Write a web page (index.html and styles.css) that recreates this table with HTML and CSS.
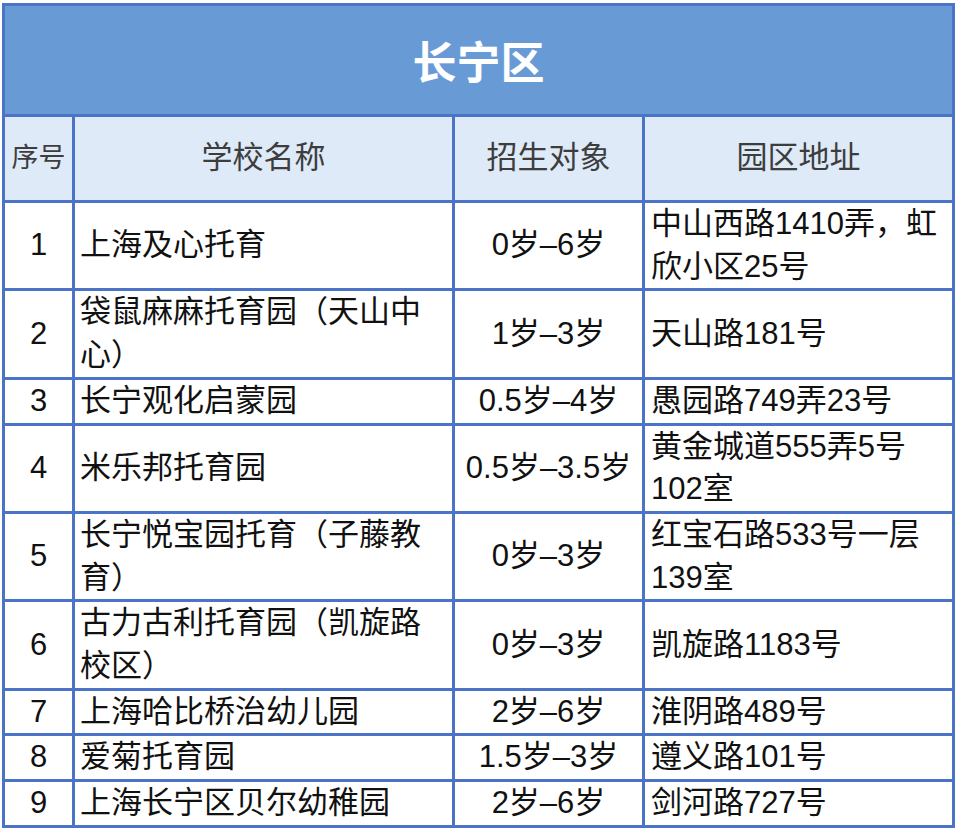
FILE: index.html
```html
<!DOCTYPE html>
<html lang="zh-CN">
<head>
<meta charset="utf-8">
<title>长宁区</title>
<link rel="stylesheet" href="styles.css">
</head>
<body>
<div class="sheet">
  <div class="roster">
    <div class="title">长宁区</div>

    <div class="row head">
      <div class="cell no head-no">序号</div>
      <div class="cell center">学校名称</div>
      <div class="cell center">招生对象</div>
      <div class="cell center">园区地址</div>
    </div>

    <div class="row">
      <div class="cell no">1</div>
      <div class="cell name">上海及心托育</div>
      <div class="cell center">0岁–6岁</div>
      <div class="cell addr">中山西路1410弄，虹欣小区25号</div>
    </div>
    <div class="row">
      <div class="cell no">2</div>
      <div class="cell name">袋鼠麻麻托育园（天山中心）</div>
      <div class="cell center">1岁–3岁</div>
      <div class="cell addr">天山路181号</div>
    </div>
    <div class="row">
      <div class="cell no">3</div>
      <div class="cell name">长宁观化启蒙园</div>
      <div class="cell center">0.5岁–4岁</div>
      <div class="cell addr">愚园路749弄23号</div>
    </div>
    <div class="row">
      <div class="cell no">4</div>
      <div class="cell name">米乐邦托育园</div>
      <div class="cell center">0.5岁–3.5岁</div>
      <div class="cell addr">黄金城道555弄5号102室</div>
    </div>
    <div class="row">
      <div class="cell no">5</div>
      <div class="cell name">长宁悦宝园托育（子藤教育）</div>
      <div class="cell center">0岁–3岁</div>
      <div class="cell addr">红宝石路533号一层139室</div>
    </div>
    <div class="row">
      <div class="cell no">6</div>
      <div class="cell name">古力古利托育园（凯旋路校区）</div>
      <div class="cell center">0岁–3岁</div>
      <div class="cell addr">凯旋路1183号</div>
    </div>
    <div class="row">
      <div class="cell no">7</div>
      <div class="cell name">上海哈比桥治幼儿园</div>
      <div class="cell center">2岁–6岁</div>
      <div class="cell addr">淮阴路489号</div>
    </div>
    <div class="row">
      <div class="cell no">8</div>
      <div class="cell name">爱菊托育园</div>
      <div class="cell center">1.5岁–3岁</div>
      <div class="cell addr">遵义路101号</div>
    </div>
    <div class="row">
      <div class="cell no">9</div>
      <div class="cell name">上海长宁区贝尔幼稚园</div>
      <div class="cell center">2岁–6岁</div>
      <div class="cell addr">剑河路727号</div>
    </div>
  </div>
</div>
</body>
</html>
```

FILE: styles.css
```css
html, body {
  margin: 0;
  background: #ffffff;
}

.sheet {
  padding: 3px 0 0 2px;
  font-family: "Liberation Sans", "Noto Sans CJK SC", sans-serif;
}

.roster {
  width: 953px;
  box-sizing: border-box;
  display: grid;
  grid-template-columns: 67px 377px 187px 307px;
  gap: 3px;
  padding: 3px;
  background: #4b74c8;
}

.title {
  grid-column: 1 / -1;
  height: 108px;
  background: #689bd6;
  color: #ffffff;
  font-family: "Noto Sans CJK SC", sans-serif;
  font-size: 44px;
  font-weight: 700;
  display: flex;
  align-items: center;
  justify-content: center;
}

.row {
  display: contents;
}

.cell {
  background: #ffffff;
  color: #111111;
  font-size: 31px;
  line-height: 42.7px;
  display: flex;
  align-items: center;
}

.head .cell {
  height: 83px;
  background: #deeaf7;
  color: #3d3d3d;
}

.no,
.center {
  justify-content: center;
  text-align: center;
}

.head-no {
  font-size: 27px;
}

.name {
  padding: 0 16px 0 5px;
}

.addr {
  padding: 0 5px 0 6px;
}
```
